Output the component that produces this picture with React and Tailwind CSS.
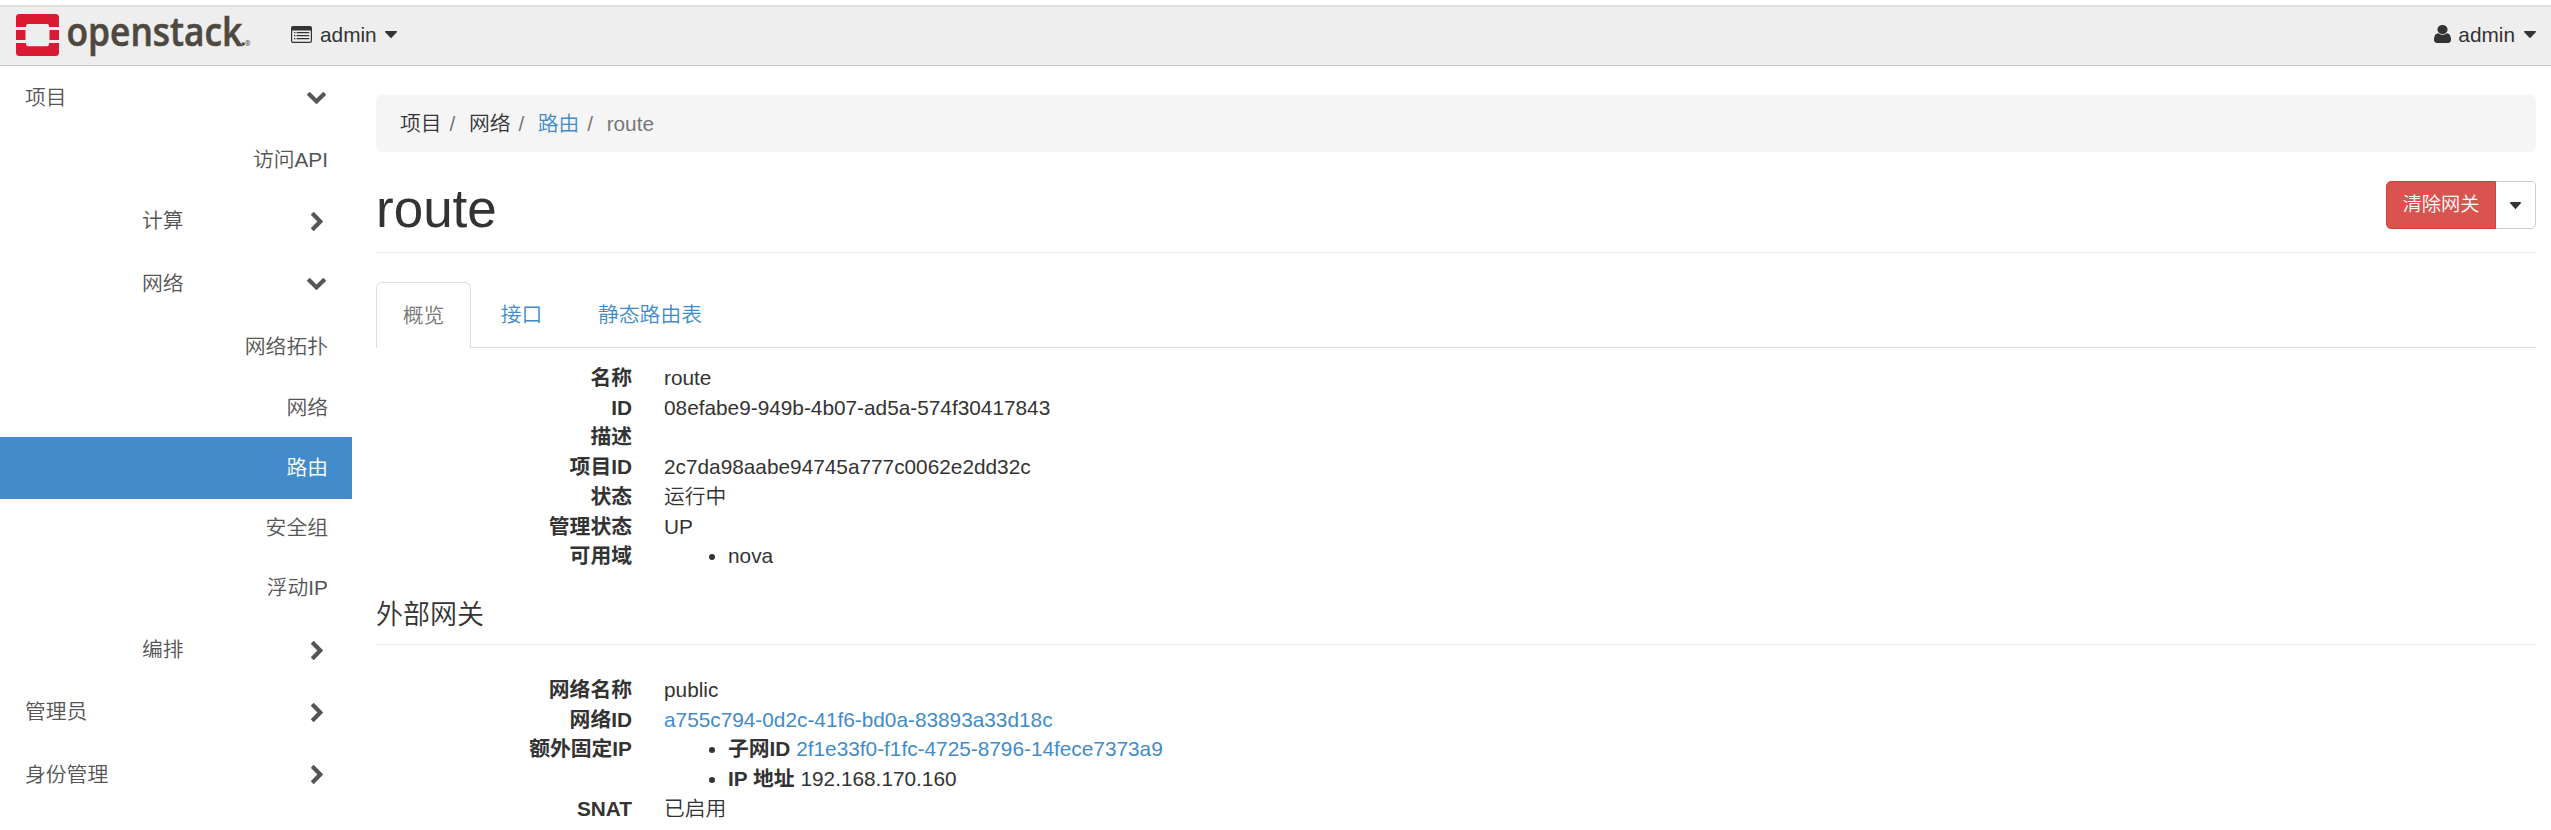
const ICONS = {
  down: {
    box: "90 531 1612 1037",
    d: "M1683 808l-742 741q-19 19-45 19t-45-19l-742-741q-19-19-19-45.5t19-45.5l166-165q19-19 45-19t45 19l531 531 531-531q19-19 45-19t45 19l166 165q19 19 19 45.5t-19 45.5z",
  },
  right: {
    box: "346 26 1036 1612",
    d: "M1363 877l-742 742q-19 19-45 19t-45-19l-166-166q-19-19-19-45t19-45l531-531-531-531q-19-19-19-45t19-45l166-166q19-19 45-19t45 19l742 742q19 19 19 45t-19 45z",
  },
  user: {
    box: "256 128 1280 1536",
    d: "M1536 1399q0 109-62.5 187t-150.5 78h-854q-88 0-150.5-78t-62.5-187q0-85 8.5-160.5t31.5-152 58.5-131 94-89 134.5-34.5q131 128 313 128t313-128q76 0 134.5 34.5t94 89 58.5 131 31.5 152 8.5 160.5zm-256-887q0 159-112.5 271.5t-271.5 112.5-271.5-112.5-112.5-271.5 112.5-271.5 271.5-112.5 271.5 112.5 112.5 271.5z",
  },
  caret: {
    box: "384 640 1024 576",
    d: "M1408 704q0 26-19 45l-448 448q-19 19-45 19t-45-19l-448-448q-19-19-19-45t19-45 45-19h896q26 0 45 19t19 45z",
  },
};

function Icon({ name, className }) {
  return (
    <svg className={className} viewBox={ICONS[name].box} preserveAspectRatio="none" fill="currentColor">
      <path d={ICONS[name].d} />
    </svg>
  );
}

function ListIcon({ className }) {
  return (
    <svg className={className} viewBox="0 0 21 17" fill="currentColor">
      <path
        fillRule="evenodd"
        d="M2 0H19Q21 0 21 2V15Q21 17 19 17H2Q0 17 0 15V2Q0 0 2 0ZM1.2 4.6V15Q1.2 15.8 2 15.8H19Q19.8 15.8 19.8 15V4.6Z"
      />
      <path d="M3 6h1.4v1.3H3zM3 9h1.4v1.3H3zM3 12h1.4v1.3H3zM5.6 6h12.6v1.3H5.6zM5.6 9h12.6v1.3H5.6zM5.6 12h12.6v1.3H5.6z" />
    </svg>
  );
}

function Logo() {
  return (
    <svg className="h-[60px] w-[240px] shrink-0 overflow-visible" viewBox="0 -8 240 60">
      <g fill="#da1a32">
        <path d="M3.5 4H39.5Q43 4 43 7.5V17H33V16Q33 14 31 14H12Q10 14 10 16V17H0V7.5Q0 4 3.5 4Z" />
        <path d="M0 20H9.5V30H0ZM33.5 20H43V30H33.5Z" />
        <path d="M0 33H10V34Q10 36.3 12 36.3H31Q33 36.3 33 34V33H43V42.5Q43 46 39.5 46H3.5Q0 46 0 42.5Z" />
      </g>
      <text
        transform="translate(50.5 35.5) scale(0.89 1)"
        textLength="197.5"
        lengthAdjust="spacingAndGlyphs"
        fill="#4e4841"
        stroke="#4e4841"
        strokeWidth="0.6"
        fontFamily="Open Sans, sans-serif"
        fontWeight="600"
        fontSize="39"
      >
        openstack
      </text>
      <circle cx="227.2" cy="34" r="1.7" fill="#4e4841" />
      <text x="228.8" y="36" fill="#4e4841" fontFamily="Open Sans, sans-serif" fontWeight="600" fontSize="7">
        ®
      </text>
    </svg>
  );
}

function SideItem({ label, level = 0, icon, active, height }) {
  const pad = level === 0 ? "pl-[25px]" : "pl-[142px]";
  return (
    <li
      className={`flex items-center pr-6 ${height} ${icon ? `justify-between ${pad}` : "justify-end"} ${
        active ? "bg-[#428bca] text-white" : "text-[#555]"
      }`}
    >
      <span>{label}</span>
      {icon === "down" && <Icon name="down" className="mr-[2px] h-3 w-[19px]" />}
      {icon === "right" && <Icon name="right" className="mr-[5px] h-[19px] w-3" />}
    </li>
  );
}

function Row({ label, children }) {
  return (
    <div className="flex min-h-[29.7px]">
      <dt className="w-[256px] shrink-0 text-right font-bold">{label}</dt>
      <dd className="ml-8">{children}</dd>
    </div>
  );
}

function Slash() {
  return <span className="ml-2 mr-[13.5px] text-[#777]">/</span>;
}

export default function App() {
  return (
    <div className="h-[830px] w-full overflow-hidden bg-white pt-[5px] font-['Liberation_Sans','Noto_Sans_CJK_SC',sans-serif] text-[20.8px] leading-[29.7px] font-[350] text-[#333]">
      <header className="flex h-[61px] items-center border-t-2 border-b border-t-[#ddd] border-b-[#c8c8c8] bg-[#eee] pr-[15px] pb-[3px] pl-4">
        <div className="-mt-[9px] flex self-start pt-1">
          <Logo />
        </div>
        <div className="ml-[35px] flex items-center">
          <ListIcon className="h-[17px] w-[21px]" />
          <span className="ml-2">admin</span>
          <Icon name="caret" className="ml-2 h-[7px] w-3" />
        </div>
        <div className="ml-auto flex items-center">
          <Icon name="user" className="h-[18px] w-[17px]" />
          <span className="ml-[7px]">admin</span>
          <Icon name="caret" className="ml-[9px] h-[7px] w-3" />
        </div>
      </header>
      <div className="flex">
        <ul className="w-[352px] shrink-0">
          <SideItem label="项目" icon="down" height="h-[64px]" />
          <SideItem label="访问API" height="h-[60px]" />
          <SideItem label="计算" level={1} icon="right" height="h-[62px]" />
          <SideItem label="网络" level={1} icon="down" height="h-[64px]" />
          <SideItem label="网络拓扑" height="h-[62px]" />
          <SideItem label="网络" height="h-[59px]" />
          <SideItem label="路由" active height="h-[62px]" />
          <SideItem label="安全组" height="h-[58px]" />
          <SideItem label="浮动IP" height="h-[62px]" />
          <SideItem label="编排" level={1} icon="right" height="h-[62px]" />
          <SideItem label="管理员" icon="right" height="h-[62px]" />
          <SideItem label="身份管理" icon="right" height="h-[63px]" />
        </ul>
        <main className="mr-[15px] ml-6 min-w-0 flex-1 pt-[29px]">
          <nav className="flex h-[57px] items-center rounded-md bg-[#f5f5f5] px-6 pt-px">
            <span>项目</span>
            <Slash />
            <span>网络</span>
            <Slash />
            <span className="text-[#428bca]">路由</span>
            <Slash />
            <span className="text-[#777]">route</span>
          </nav>
          <div className="flex h-[101px] items-start justify-between border-b border-[#eee] pt-[29px]">
            <h1 className="text-[53px] leading-[56px]">route</h1>
            <div className="flex h-12 text-[19.2px]">
              <button className="flex w-[110px] items-center justify-center rounded-l-[5px] border border-[#d43f3a] bg-[#d9534f] text-white">
                清除网关
              </button>
              <button className="flex w-10 items-center justify-center rounded-r-[5px] border border-l-0 border-[#ccc] bg-white">
                <Icon name="caret" className="h-[7px] w-[11px]" />
              </button>
            </div>
          </div>
          <div className="mt-[29px] flex h-[66px] gap-[3px] border-b border-[#ddd] text-[#428bca]">
            <div className="-mb-px flex w-[95px] items-center justify-center rounded-t-md border border-b-0 border-[#ddd] bg-white text-[#777]">
              概览
            </div>
            <div className="flex w-[95px] items-center justify-center">接口</div>
            <div className="flex items-center px-[26px]">静态路由表</div>
          </div>
          <dl className="pt-[15px]">
            <Row label="名称">route</Row>
            <Row label="ID">08efabe9-949b-4b07-ad5a-574f30417843</Row>
            <Row label="描述" />
            <Row label="项目ID">2c7da98aabe94745a777c0062e2dd32c</Row>
            <Row label="状态">运行中</Row>
            <Row label="管理状态">UP</Row>
            <Row label="可用域">
              <ul className="list-disc pl-16">
                <li>nova</li>
              </ul>
            </Row>
          </dl>
          <h4 className="mt-[25px] h-[49px] border-b border-[#eee] text-[27px] leading-[39px]">外部网关</h4>
          <dl className="pt-[30px]">
            <Row label="网络名称">public</Row>
            <Row label="网络ID">
              <span className="text-[#428bca]">a755c794-0d2c-41f6-bd0a-83893a33d18c</span>
            </Row>
            <Row label="额外固定IP">
              <ul className="list-disc pl-16">
                <li>
                  <b className="font-bold">子网ID</b>{" "}
                  <span className="text-[#428bca]">2f1e33f0-f1fc-4725-8796-14fece7373a9</span>
                </li>
                <li>
                  <b className="font-bold">IP 地址</b> 192.168.170.160
                </li>
              </ul>
            </Row>
            <Row label="SNAT">已启用</Row>
          </dl>
        </main>
      </div>
    </div>
  );
}
